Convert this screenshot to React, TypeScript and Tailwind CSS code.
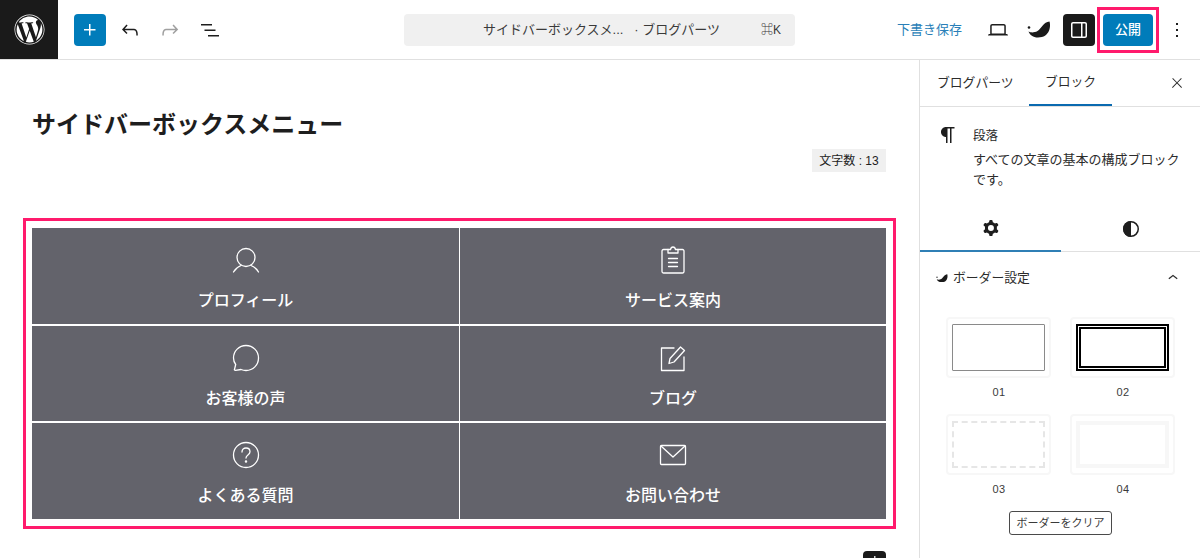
import type { ReactNode } from "react";
import { FaWordpress } from "react-icons/fa";

function WpIcon({ d, className = "", size = 24 }: { d: string; className?: string; size?: number }) {
  return (
    <svg viewBox="0 0 24 24" width={size} height={size} fill="currentColor" className={className}>
      <path d={d} fillRule="evenodd" />
    </svg>
  );
}

function SwellLogo({ width = 24 }: { width?: number }) {
  return (
    <svg viewBox="0 0 24 17" width={width} height={(width * 17) / 24} fill="#1a1a1a">
      <path d="M22.500.5C24 5 23 16.500 11 16.500 6 16.500 3 14 1.500 10.500 3 11.500 7 12 10.500 10 14.500 7.500 16.500 1 22.500.5Z" />
      <circle cx="2" cy="6.500" r="1.300" />
    </svg>
  );
}

function LineIcon({ children, w = 28, h = 28 }: { children: ReactNode; w?: number; h?: number }) {
  return (
    <svg viewBox={`0 0 ${w} ${h}`} width={w} height={h} fill="none" stroke="white" strokeWidth="1.3" strokeLinecap="round" strokeLinejoin="round">
      {children}
    </svg>
  );
}

const menu = [
  {
    label: "プロフィール",
    icon: (
      <LineIcon>
        <circle cx="14" cy="11.500" r="9" />
        <path d="M1.500 26c2-3.500 5-5.500 7.500-6.500M19 19.500c2.500 1 5.500 3 7.500 6.500" />
      </LineIcon>
    ),
  },
  {
    label: "サービス案内",
    icon: (
      <LineIcon>
        <path d="M9 3.500H4.500a1.500 1.500 0 0 0-1.500 1.500v20.500a1.500 1.500 0 0 0 1.500 1.500h19a1.500 1.500 0 0 0 1.500-1.500V5a1.500 1.500 0 0 0-1.500-1.500H19" />
        <path d="M9 7V3.500h2.500c.3-1.500 1.200-2.500 2.500-2.500s2.200 1 2.500 2.500H19V7Z" />
        <path d="M9.500 12.500h9M9.500 16.500h9M9.500 20.500h9" />
      </LineIcon>
    ),
  },
  {
    label: "お客様の声",
    icon: (
      <LineIcon>
        <path d="M14 1.500c7 0 12.500 5.500 12.500 12.500S21 26.500 14 26.500c-2 0-3.500-.4-5-1l-5.500.8c-.8.100-1.200-.4-1-1l1.200-4.800C2.300 18.700 1.500 16.500 1.500 14 1.500 7 7 1.500 14 1.500Z" />
      </LineIcon>
    ),
  },
  {
    label: "ブログ",
    icon: (
      <LineIcon>
        <path d="M15 4H2.500v22.500H25V13" />
        <path d="M10 19.500l1-5L21.500 3l4 3.500L15 18Z" />
      </LineIcon>
    ),
  },
  {
    label: "よくある質問",
    icon: (
      <LineIcon>
        <circle cx="14" cy="14" r="12.500" />
        <path d="M10 11c0-2.500 1.800-4 4-4s4 1.500 4 3.800c0 3.200-4 3.200-4 6.200" />
        <circle cx="14" cy="20.500" r=".6" fill="white" />
      </LineIcon>
    ),
  },
  {
    label: "お問い合わせ",
    icon: (
      <LineIcon h={22}>
        <rect x="1.500" y="1.500" width="25" height="19" rx="1" />
        <path d="M2 2l12 11L26 2" />
      </LineIcon>
    ),
  },
];

function Tile({ label, inner }: { label: string; inner: string }) {
  return (
    <div className="flex flex-col items-center">
      <div className="flex h-[61px] w-[105px] rounded border-2 border-[#f7f7f7] px-[4px] py-[5px]">
        <div className={`flex-1 ${inner}`} />
      </div>
      <span className="ml-[1px] mt-[7px] text-[11px] leading-[14px] tracking-[0.5px] text-[#3a3a3a]">{label}</span>
    </div>
  );
}

export default function App() {
  return (
    <div className="flex h-[558px] w-[1200px] flex-col overflow-hidden bg-white text-[#1e1e1e] [font-family:'Liberation_Sans','Noto_Sans_CJK_JP',sans-serif]">
      {/* top bar */}
      <header className="flex h-[60px] shrink-0 items-center border-b border-[#e0e0e0]">
        <div className="flex h-[59px] w-[58px] items-center justify-center bg-[#1a1a1a] text-white">
          <FaWordpress size={31} />
        </div>
        <button className="ml-4 flex h-8 w-8 items-center justify-center rounded-sm bg-[#007cba] text-white">
          <WpIcon d="M11 12.500V17.500H12.500V12.500H17.500V11H12.500V6H11V11H6V12.500H11Z" />
        </button>
        <WpIcon className="ml-[12px]" d="M18.300 11.700c-.6-.6-1.400-.9-2.300-.9H6.700l2.900-3.300-1.100-1-4.500 5L8.500 16l1-1-2.700-2.700H16c.5 0 .9.200 1.300.5 1 1 1 3.400 1 4.500v.3h1.500v-.2c0-1.500 0-4.300-1.500-5.700z" />
        <WpIcon className="ml-4 text-[#a0a0a0]" d="M15.600 6.500l-1.100 1 2.900 3.300H8c-.9 0-1.700.3-2.300.9-1.400 1.500-1.400 4.200-1.400 5.600v.2h1.500v-.3c0-1.100 0-3.500 1-4.500.3-.3.7-.5 1.300-.5h9.200L14.500 15l1.100 1.100 4.600-4.600-4.600-5z" />
        <WpIcon className="ml-4" d="M3 6h11v1.500H3V6Zm3.500 5.500h11V13h-11v-1.500ZM21 17H10v1.500h11V17Z" />
        <div className="ml-[182px] flex h-8 w-[391px] items-center rounded bg-[#f0f0f0] text-[13px] text-[#3a3a3a]">
          <span className="ml-[79px] w-[278px]">サイドバーボックスメ...&nbsp;&nbsp;&nbsp;· ブログパーツ</span>
          <span className="text-[12px]">⌘K</span>
        </div>
        <span className="ml-[102px] text-[13px] text-[#2a7fb8]">下書き保存</span>
        <WpIcon className="ml-[24px]" d="M20.500 16h-.7V8c0-1.100-.9-2-2-2H6.200c-1.100 0-2 .9-2 2v8h-.7c-.8 0-1.500.7-1.500 1.500h20c0-.8-.7-1.500-1.500-1.500zM5.700 8c0-.3.2-.5.5-.5h11.600c.3 0 .5.200.5.5v7.600H5.700V8z" />
        <div className="ml-[17px] flex w-[24px]">
          <SwellLogo />
        </div>
        <div className="ml-[12px] flex h-8 w-8 items-center justify-center rounded-sm bg-[#1a1a1a] text-white">
          <WpIcon d="M18 4H6c-1.100 0-2 .9-2 2v12c0 1.100.9 2 2 2h12c1.100 0 2-.9 2-2V6c0-1.100-.9-2-2-2zm-8.500 14.500H6c-.3 0-.5-.2-.5-.5V6c0-.3.2-.5.5-.5h8v13zm9-.5c0 .3-.2.500-.5.500h-2.500v-13H18c.3 0 .5.200.5.500v12z" />
        </div>
        <div className="ml-[2px] flex h-[46px] w-[62px] items-center justify-center border-[3px] border-[#ff1a6c]">
          <button className="flex h-8 w-[50px] items-center justify-center rounded-sm bg-[#007cba] text-[13px] font-medium text-white">公開</button>
        </div>
        <WpIcon className="ml-[6px]" d="M13 19h-2v-2h2v2zm0-6h-2v-2h2v2zm0-6h-2V5h2v2z" />
      </header>

      <div className="flex min-h-0 flex-1">
        {/* editor canvas */}
        <main className="w-[919px] shrink-0">
          <h1 className="ml-[32px] mt-[47px] text-[24px] font-bold leading-9">サイドバーボックスメニュー</h1>
          <div className="mr-[33px] mt-[6px] flex justify-end">
            <span className="flex h-[23px] w-[74px] items-center justify-center bg-[#f0f0f0] text-[12px]">文字数 : 13</span>
          </div>
          <div className="ml-[23px] mt-[46px] w-[873px] border-[3px] border-[#ff1a6c] px-[6px] pb-[7px] pt-[7px]">
            <div className="grid grid-cols-[427px_426px] grid-rows-[96px_95px_96px] gap-x-px gap-y-[2px] bg-white">
              {menu.map((item) => (
                <div key={item.label} className="flex flex-col items-center bg-[#63636b] pt-[18px] text-white">
                  <div className="flex h-[28px] items-center">{item.icon}</div>
                  <span className="mt-[15px] text-[16px] font-medium leading-6">{item.label}</span>
                </div>
              ))}
            </div>
          </div>
          <div className="mr-[33px] mt-[22px] flex justify-end">
            <div className="flex h-[24px] w-[23px] justify-center rounded-sm bg-[#1a1a1a] text-white">
              <WpIcon size={20} d="M11 12.500V17.500H12.500V12.500H17.500V11H12.500V6H11V11H6V12.500H11Z" />
            </div>
          </div>
        </main>

        {/* settings sidebar */}
        <aside className="w-[281px] shrink-0 border-l border-[#e0e0e0]">
          <div className="flex h-[47px] items-center border-b border-[#e0e0e0] pl-[17px] text-[12.800px] text-[#2c2c2c]">
            <span className="w-[92px]">ブログパーツ</span>
            <span className="flex h-[46px] w-[83px] items-center justify-center border-b-2 border-[#0a6ab0]">ブロック</span>
            <WpIcon className="ml-[57px]" size={16} d="M13 11.800l6.100-6.300-1-1-6.100 6.200-6.100-6.200-1 1 6.100 6.300-6.500 6.700 1 1 6.500-6.600 6.500 6.600 1-1z" />
          </div>

          <div className="flex h-[98px] pl-[16px] pt-[16px]">
            <WpIcon className="shrink-0" d="m9.996 14v-.225l.004.000v6.225h1.500v-14.500h2.500v14.500h1.500v-14.500h3v-1.500h-8.504c-2.761 0-5 2.239-5 5 0 2.761 2.239 5 5 5z" />
            <div className="ml-[13px] w-[212px] text-[13px] leading-5 text-[#2c2c2c]">
              <p className="mt-[4px] text-[12.500px] leading-[18px]">段落</p>
              <p className="mt-[5px]">すべての文章の基本の構成ブロックです。</p>
            </div>
          </div>

          <div className="flex h-[47px] border-b border-[#e0e0e0]">
            <div className="flex h-[47px] w-[141px] items-center justify-center border-b-2 border-[#2f7fb5]">
              <WpIcon d="M10.289 4.836A1 1 0 0111.275 4h1.306a1 1 0 01.987.836l.244 1.466c.787.26 1.503.679 2.108 1.218l1.393-.522a1 1 0 011.216.437l.653 1.13a1 1 0 01-.23 1.273l-1.148.944a6.025 6.025 0 010 2.435l1.149.946a1 1 0 01.23 1.272l-.653 1.13a1 1 0 01-1.216.437l-1.394-.522c-.605.54-1.32.958-2.108 1.218l-.244 1.466a1 1 0 01-.987.836h-1.306a1 1 0 01-.986-.836l-.244-1.466a5.995 5.995 0 01-2.108-1.218l-1.394.522a1 1 0 01-1.217-.436l-.653-1.131a1 1 0 01.23-1.272l1.149-.946a6.026 6.026 0 010-2.435l-1.148-.944a1 1 0 01-.23-1.272l.653-1.131a1 1 0 011.217-.437l1.393.522a5.994 5.994 0 012.108-1.218l.244-1.466zM14.929 12a3 3 0 11-6 0 3 3 0 016 0z" />
            </div>
            <div className="flex h-[47px] w-[139px] items-center justify-center">
              <svg viewBox="0 0 24 24" width="24" height="24" fill="currentColor">
                <circle cx="12" cy="12" r="7.250" fill="none" stroke="currentColor" strokeWidth="1.500" />
                <path d="M12 4a8 8 0 0 0 0 16Z" />
              </svg>
            </div>
          </div>

          <div className="flex h-[52px] items-center pl-[16px] text-[12.800px] text-[#2c2c2c]">
            <SwellLogo width={12} />
            <span className="ml-[5px] w-[210px]">ボーダー設定</span>
            <WpIcon size={20} d="M6.500 12.400L12 8l5.500 4.400-.9 1.200L12 10l-4.500 3.600-1-1.200z" />
          </div>

          <div className="ml-[26px] mt-[13px] grid w-[229px] grid-cols-2 gap-x-[19px] gap-y-[15px]">
            <Tile label="01" inner="rounded-[1px] border-[1.500px] border-[#8a8a8a]" />
            <Tile label="02" inner="border-[5px] border-double border-black" />
            <Tile label="03" inner="border-2 border-dashed border-[#e6e6e6]" />
            <Tile label="04" inner="border-[4px] border-[#f7f7f7]" />
          </div>

          <div className="ml-[89px] mt-[15px] flex h-[24px] w-[103px] items-center justify-center rounded-[3px] border border-[#4a4a4a] text-[11px] text-[#3a3a3a]">
            ボーダーをクリア
          </div>
        </aside>
      </div>
    </div>
  );
}
